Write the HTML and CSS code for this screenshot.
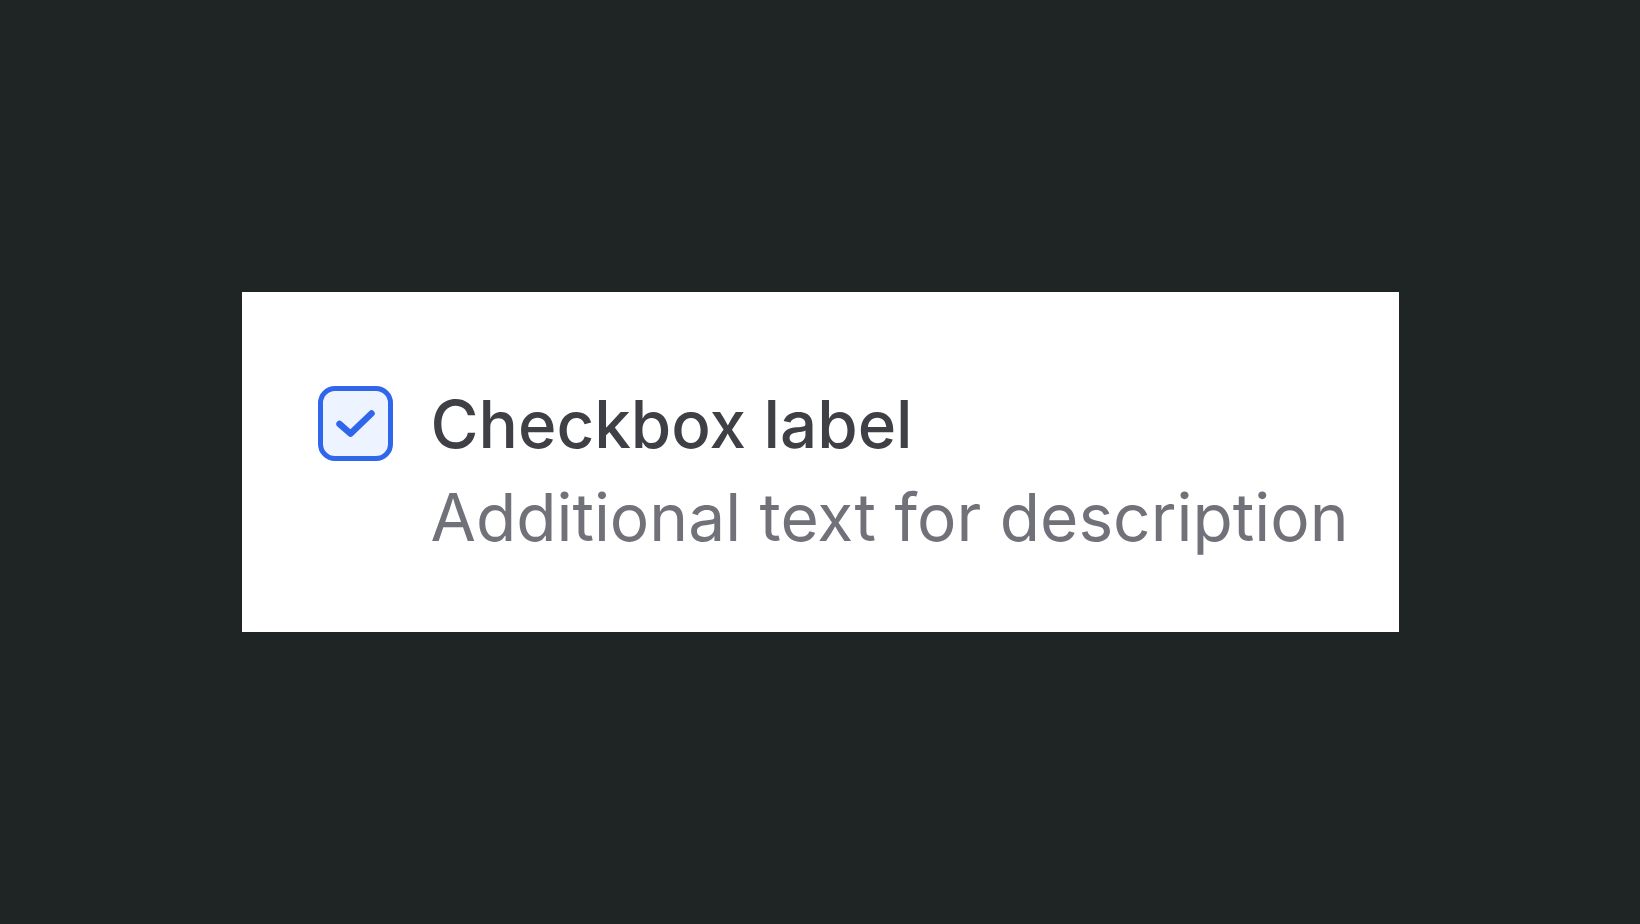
FILE: index.html
```html
<!DOCTYPE html>
<html>
<head>
<meta charset="utf-8">
<link rel="stylesheet" href="styles.css">
</head>
<body>
  <div class="card">
    <div class="row">
      <div class="box">
        <svg width="65" height="65" viewBox="0 0 65 65"><path d="M16.5 33 L27.5 42.6 L48.5 22.5" fill="none" stroke="#2f66eb" stroke-width="6.5" stroke-linecap="round" stroke-linejoin="round"/></svg>
      </div>
      <div class="texts">
        <div class="label">Checkbox label</div>
        <div class="desc">Additional text for description</div>
      </div>
    </div>
  </div>
</body>
</html>
```
FILE: styles.css
```css
html, body { margin: 0; padding: 0; }
body {
  background: #1f2424;
  height: 100vh;
  display: flex;
  align-items: center;
  justify-content: center;
  font-family: Inter, "Noto Sans", sans-serif;
}
.card {
  box-sizing: border-box;
  width: 1157px;
  height: 340px;
  background: #ffffff;
  padding: 86px 0 0 76px;
}
.row {
  display: flex;
  align-items: flex-start;
  gap: 38px;
}
.box {
  box-sizing: border-box;
  width: 75px;
  height: 75px;
  margin-top: 8px;
  border: 5px solid #2f66eb;
  border-radius: 17px;
  background: #eef4ff;
  flex: none;
}
.box svg { display: block; }
.label {
  font-size: 65.5px;
  line-height: 93px;
  font-weight: 500;
  color: #3f3f46;
}
.desc {
  font-size: 65.8px;
  line-height: 93px;
  font-weight: 400;
  color: #71717a;
}
```
